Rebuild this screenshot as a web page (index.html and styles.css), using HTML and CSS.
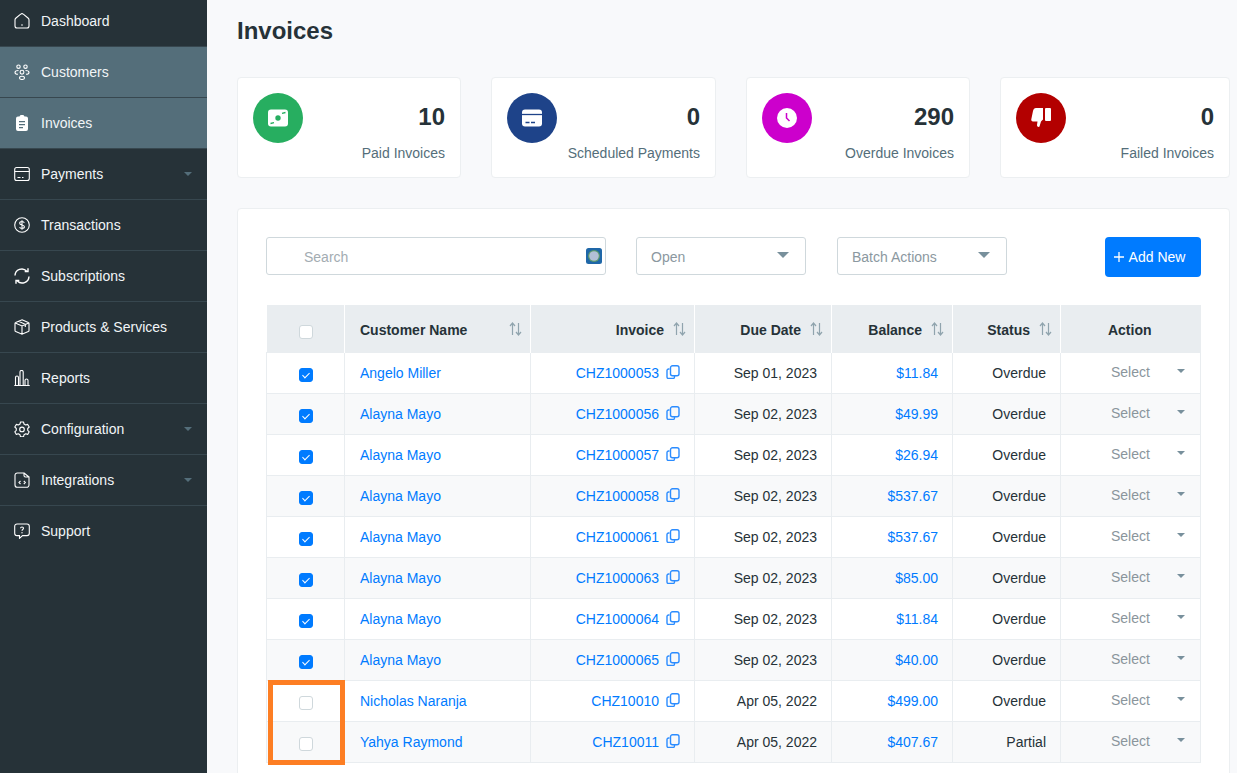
FILE: index.html
```html
<!DOCTYPE html>
<html lang="en">
<head>
<meta charset="utf-8">
<title>Invoices</title>
<link rel="stylesheet" href="styles.css">
</head>
<body>
<svg class="defs" width="0" height="0" aria-hidden="true">
  <symbol id="sort" viewBox="0 0 13 14"><path class="sort-up" d="M3.5 13V1.5M1 4l2.5-3L6 4"/><path class="sort-down" d="M9.5 1v11.5M7 10l2.5 3 2.5-3"/></symbol>
  <symbol id="copy" viewBox="0 0 14 14"><path d="M3.500 4H2.600A1.600 1.600 0 0 0 1 5.600v6.300a1.600 1.600 0 0 0 1.600 1.600h4.300a1.600 1.600 0 0 0 1.600-1.600V11"/><rect x="4.500" y=".8" width="8.500" height="10" rx="2"/></symbol>
</svg>
<div class="app">
  <aside class="sidebar">
    <nav class="nav">
      <a class="nav-item"><svg class="nav-icon" viewBox="0 0 16 16"><path d="M1 6.800c0-.8.4-1.300 1-1.800l4.700-3.800a2 2 0 0 1 2.600 0L14 5c.6.5 1 1 1 1.800V13a2 2 0 0 1-2 2H3a2 2 0 0 1-2-2z"/><circle class="dot" cx="8" cy="12" r=".8"/></svg><span>Dashboard</span></a>
      <a class="nav-item active"><svg class="nav-icon" viewBox="0 0 16 16"><circle cx="4.500" cy="2.700" r="1.700"/><circle cx="11.500" cy="2.700" r="1.700"/><circle cx="8" cy="8.200" r="1.900"/><path d="M5.500 14c0-1 1-1.700 2.500-1.700s2.500.7 2.500 1.700-1 1.500-2.500 1.500-2.500-.5-2.500-1.500zM4.500 6.500C2.500 6.500 1 7.200 1 8.500s1.200 1.800 3 1.800M11.500 6.500c2 0 3.500.7 3.500 2s-1.200 1.800-3 1.800"/></svg><span>Customers</span></a>
      <a class="nav-item active"><svg class="nav-icon" viewBox="0 0 16 16"><path class="fill" fill-rule="evenodd" d="M5.500 1.500C5.700.6 6.500 0 7.300 0h1.400c.8 0 1.600.6 1.800 1.500H12a2 2 0 0 1 2 2V14a2 2 0 0 1-2 2H4a2 2 0 0 1-2-2V3.500a2 2 0 0 1 2-2zM5 6v1.300h6V6zm0 3v1.300h6V9zm0 3v1.300h4V12z"/></svg><span>Invoices</span></a>
      <a class="nav-item"><svg class="nav-icon" viewBox="0 0 16 16"><rect x=".7" y="1.500" width="14.600" height="13" rx="2"/><path d="M.7 5.500h14.600M3.500 11.500h3M8 11.500h1.500"/></svg><span>Payments</span><i class="nav-caret"></i></a>
      <a class="nav-item"><svg class="nav-icon" viewBox="0 0 16 16"><circle cx="8" cy="8" r="7.300"/><path d="M10.300 5.800C10 4.900 9.100 4.500 8 4.500c-1.300 0-2.300.6-2.300 1.700C5.700 8.600 10.400 7.300 10.400 9.800c0 1.100-1 1.700-2.400 1.700-1.200 0-2.100-.5-2.400-1.400M8 3.200v9.600"/></svg><span>Transactions</span></a>
      <a class="nav-item"><svg class="nav-icon thick" viewBox="0 0 16 16"><path d="M1 7.500A6.800 6.800 0 0 1 12.800 3.200M14 .3V3.600h-3.300M15 8.500A6.800 6.800 0 0 1 3.200 12.800M2 15.700V12.400h3.300"/></svg><span>Subscriptions</span></a>
      <a class="nav-item"><svg class="nav-icon" viewBox="0 0 16 16"><path d="M8 .8l6.300 2.700a1 1 0 0 1 .7 1v7a1 1 0 0 1-.7 1L8 15.200 1.700 12.500a1 1 0 0 1-.7-1v-7a1 1 0 0 1 .7-1zM1.300 4 8 7l6.700-3M8 7v8M4.500 2.300 11.300 5.300V8"/></svg><span>Products &amp; Services</span></a>
      <a class="nav-item"><svg class="nav-icon" viewBox="0 0 16 16"><path d="M.3 15.500h15.400M1.500 15V7.500a1.500 1.500 0 0 1 3 0V15M6 15V2a1.600 1.600 0 0 1 3.200 0v13M11 15v-4.500a1.500 1.500 0 0 1 3 0V15"/></svg><span>Reports</span></a>
      <a class="nav-item"><svg class="nav-icon" viewBox="0 0 16 16"><path d="M6.500 1h3l.5 2 1.700 1 2-.6 1.500 2.600-1.500 1.500v1.800l1.500 1.500-1.500 2.600-2-.6-1.700 1-.5 2h-3l-.5-2-1.700-1-2 .6L.8 10.800l1.500-1.500V7.500L.8 6l1.500-2.600 2 .6L6 3z" stroke-linejoin="round"/><circle cx="8" cy="8.400" r="2.300"/></svg><span>Configuration</span><i class="nav-caret"></i></a>
      <a class="nav-item"><svg class="nav-icon" viewBox="0 0 16 16"><path d="M3.300 1H10v2.500A1.500 1.500 0 0 0 11.500 5H15v8a2.300 2.300 0 0 1-2.300 2.300H3.300A2.300 2.300 0 0 1 1 13V3.300A2.300 2.300 0 0 1 3.300 1zM10 1l5 4M6.500 9 5 10.500 6.500 12M9.800 9l1.500 1.500L9.800 12"/></svg><span>Integrations</span><i class="nav-caret"></i></a>
      <a class="nav-item"><svg class="nav-icon" viewBox="0 0 16 16"><path d="M3 1h10a2.300 2.300 0 0 1 2.300 2.300v7a2.300 2.300 0 0 1-2.300 2.300H8.500l-3 2.700v-2.700H3A2.300 2.300 0 0 1 .7 10.300v-7A2.300 2.300 0 0 1 3 1z"/><path d="M6.500 5.300C6.600 4.500 7.200 4 8 4s1.500.5 1.500 1.300c0 1.200-1.500 1.200-1.500 2.400"/><circle class="dot" cx="8" cy="9.700" r=".7"/></svg><span>Support</span></a>
    </nav>
  </aside>
  <main class="main">
    <h1 class="title">Invoices</h1>
    <section class="stats">
      <div class="stat">
        <div class="stat-icon green"><svg viewBox="0 0 20 20" class="stat-svg"><rect y="1.500" width="20" height="17" rx="3" fill="#fff"/><circle cx="10" cy="10" r="2.700" fill="#27ae60"/><path d="M2.500 15.500l3.500-.8M14 5.300l3.500-.8" stroke="#27ae60" stroke-width="1.300"/></svg></div>
        <div class="stat-text"><div class="stat-num">10</div><div class="stat-label">Paid Invoices</div></div>
      </div>
      <div class="stat">
        <div class="stat-icon navy"><svg viewBox="0 0 20 20" class="stat-svg"><rect y="1.500" width="20" height="17" rx="3" fill="#fff"/><path d="M0 6.500h20" stroke="#1e4389" stroke-width="1.300"/><path d="M3.500 14.500h4M9 14.500h4" stroke="#1e4389" stroke-width="1.300"/></svg></div>
        <div class="stat-text"><div class="stat-num">0</div><div class="stat-label">Scheduled Payments</div></div>
      </div>
      <div class="stat">
        <div class="stat-icon magenta"><svg viewBox="0 0 20 20" class="stat-svg"><circle cx="10" cy="10" r="10" fill="#fff"/><path d="M9.500 5v5l3 3" fill="none" stroke="#c0c" stroke-width="1.500"/></svg></div>
        <div class="stat-text"><div class="stat-num">290</div><div class="stat-label">Overdue Invoices</div></div>
      </div>
      <div class="stat">
        <div class="stat-icon red"><svg viewBox="0 0 20 20" class="stat-svg"><path fill="#fff" d="M5 0h7v11.500l-2 2-1.500 5c-.3.800-2.500.800-2.500-1.500l.5-3.500H2c-1.300 0-2-1-1.700-2.200L2 3c.4-1.800 1.500-3 3-3z"/><rect x="14" width="6" height="13" rx="1" fill="#fff"/></svg></div>
        <div class="stat-text"><div class="stat-num">0</div><div class="stat-label">Failed Invoices</div></div>
      </div>
    </section>
    <section class="panel">
      <div class="toolbar">
        <div class="search">
          <input class="search-input" type="text" placeholder="Search">
          <svg class="ext-icon" viewBox="0 0 16 16"><rect width="16" height="16" rx="2.500" fill="#1f67a8"/><circle cx="8" cy="8" r="6" fill="#5c9a6e"/><circle cx="8" cy="8" r="4.800" fill="#b3c0d6"/></svg>
        </div>
        <div class="select wide"><span>Open</span><i class="select-caret"></i></div>
        <div class="select batch"><span>Batch Actions</span><i class="select-caret"></i></div>
        <button class="add-btn"><svg class="plus" viewBox="0 0 12 12"><path d="M6 1v10M1 6h10"/></svg>Add New</button>
      </div>
      <div class="table-wrap">
        <table class="grid">
          <colgroup><col class="c1"><col class="c2"><col class="c3"><col class="c4"><col class="c5"><col class="c6"><col class="c7"></colgroup>
          <thead>
            <tr>
              <th class="center first"><span class="check"></span></th>
              <th><div class="th-in between"><span>Customer Name</span><svg class="sort"><use href="#sort"/></svg></div></th>
              <th><div class="th-in"><span>Invoice</span><svg class="sort active-up"><use href="#sort"/></svg></div></th>
              <th><div class="th-in"><span>Due Date</span><svg class="sort"><use href="#sort"/></svg></div></th>
              <th><div class="th-in"><span>Balance</span><svg class="sort"><use href="#sort"/></svg></div></th>
              <th><div class="th-in"><span>Status</span><svg class="sort"><use href="#sort"/></svg></div></th>
              <th class="center last">Action</th>
            </tr>
          </thead>
          <tbody>
            <tr><td class="center"><span class="check on"></span></td><td><a class="link">Angelo Miller</a></td><td class="right"><a class="link">CHZ1000053</a><svg class="copy"><use href="#copy"/></svg></td><td class="right">Sep 01, 2023</td><td class="right"><a class="link">$11.84</a></td><td class="right">Overdue</td><td><div class="action"><span>Select</span><i class="action-caret"></i></div></td></tr>
            <tr><td class="center"><span class="check on"></span></td><td><a class="link">Alayna Mayo</a></td><td class="right"><a class="link">CHZ1000056</a><svg class="copy"><use href="#copy"/></svg></td><td class="right">Sep 02, 2023</td><td class="right"><a class="link">$49.99</a></td><td class="right">Overdue</td><td><div class="action"><span>Select</span><i class="action-caret"></i></div></td></tr>
            <tr><td class="center"><span class="check on"></span></td><td><a class="link">Alayna Mayo</a></td><td class="right"><a class="link">CHZ1000057</a><svg class="copy"><use href="#copy"/></svg></td><td class="right">Sep 02, 2023</td><td class="right"><a class="link">$26.94</a></td><td class="right">Overdue</td><td><div class="action"><span>Select</span><i class="action-caret"></i></div></td></tr>
            <tr><td class="center"><span class="check on"></span></td><td><a class="link">Alayna Mayo</a></td><td class="right"><a class="link">CHZ1000058</a><svg class="copy"><use href="#copy"/></svg></td><td class="right">Sep 02, 2023</td><td class="right"><a class="link">$537.67</a></td><td class="right">Overdue</td><td><div class="action"><span>Select</span><i class="action-caret"></i></div></td></tr>
            <tr><td class="center"><span class="check on"></span></td><td><a class="link">Alayna Mayo</a></td><td class="right"><a class="link">CHZ1000061</a><svg class="copy"><use href="#copy"/></svg></td><td class="right">Sep 02, 2023</td><td class="right"><a class="link">$537.67</a></td><td class="right">Overdue</td><td><div class="action"><span>Select</span><i class="action-caret"></i></div></td></tr>
            <tr><td class="center"><span class="check on"></span></td><td><a class="link">Alayna Mayo</a></td><td class="right"><a class="link">CHZ1000063</a><svg class="copy"><use href="#copy"/></svg></td><td class="right">Sep 02, 2023</td><td class="right"><a class="link">$85.00</a></td><td class="right">Overdue</td><td><div class="action"><span>Select</span><i class="action-caret"></i></div></td></tr>
            <tr><td class="center"><span class="check on"></span></td><td><a class="link">Alayna Mayo</a></td><td class="right"><a class="link">CHZ1000064</a><svg class="copy"><use href="#copy"/></svg></td><td class="right">Sep 02, 2023</td><td class="right"><a class="link">$11.84</a></td><td class="right">Overdue</td><td><div class="action"><span>Select</span><i class="action-caret"></i></div></td></tr>
            <tr><td class="center"><span class="check on"></span></td><td><a class="link">Alayna Mayo</a></td><td class="right"><a class="link">CHZ1000065</a><svg class="copy"><use href="#copy"/></svg></td><td class="right">Sep 02, 2023</td><td class="right"><a class="link">$40.00</a></td><td class="right">Overdue</td><td><div class="action"><span>Select</span><i class="action-caret"></i></div></td></tr>
            <tr><td class="center"><span class="check"></span></td><td><a class="link">Nicholas Naranja</a></td><td class="right"><a class="link">CHZ10010</a><svg class="copy"><use href="#copy"/></svg></td><td class="right">Apr 05, 2022</td><td class="right"><a class="link">$499.00</a></td><td class="right">Overdue</td><td><div class="action"><span>Select</span><i class="action-caret"></i></div></td></tr>
            <tr><td class="center"><span class="check"></span></td><td><a class="link">Yahya Raymond</a></td><td class="right"><a class="link">CHZ10011</a><svg class="copy"><use href="#copy"/></svg></td><td class="right">Apr 05, 2022</td><td class="right"><a class="link">$407.67</a></td><td class="right">Partial</td><td><div class="action"><span>Select</span><i class="action-caret"></i></div></td></tr>
          </tbody>
        </table>
        <div class="highlight"></div>
      </div>
    </section>
  </main>
</div>
</body>
</html>
```
FILE: styles.css
```css
* { box-sizing: border-box; }
html, body { margin: 0; height: 100%; overflow: hidden; }
body { font-family: "Liberation Sans", Arial, sans-serif; font-size: 14px; color: #263238; background: #f8f9fb; }
.defs { position: absolute; }
.app { display: flex; height: 773px; overflow: hidden; }

.sidebar { width: 207px; flex: none; background: #263238; overflow: hidden; }
.nav { margin-top: -4px; display: flex; flex-direction: column; }
.nav-item { height: 51px; display: flex; align-items: center; padding: 0 14px; border-bottom: 1px solid #37474f; color: #f1f5f7; gap: 11px; }
.nav-item:last-child { border-bottom-color: transparent; }
.nav-item.active { background: #546e7a; }
.nav-icon { width: 16px; height: 16px; flex: none; fill: none; stroke: #fff; stroke-width: 1.100; }
.nav-icon.thick { stroke-width: 1.400; }
.nav-icon .dot { fill: #fff; stroke: none; }
.nav-icon .fill { fill: #fff; stroke: none; }
.nav-caret { margin-left: auto; margin-right: 1px; width: 0; height: 0; border-left: 4.500px solid transparent; border-right: 4.500px solid transparent; border-top: 4.500px solid #546e7a; }

.main { flex: 1; min-width: 0; padding: 0 7px 0 30px; }
.title { margin: 0; padding-top: 17px; height: 77px; font-size: 24px; line-height: 28px; font-weight: 700; color: #263238; }

.stats { display: grid; grid-template-columns: 224px 225px 224px 230px; column-gap: 30px; }
.stat { height: 101px; background: #fff; border: 1px solid #eceff1; border-radius: 4px; padding: 15px; display: flex; justify-content: space-between; }
.stat-icon { width: 50px; height: 50px; border-radius: 50%; display: flex; align-items: center; justify-content: center; flex: none; }
.stat-svg { width: 20px; height: 20px; }
.green { background: #27ae60; }
.navy { background: #1e4389; }
.magenta { background: #c0c; }
.red { background: #b30000; }
.stat-text { text-align: right; padding-top: 10px; }
.stat-num { font-size: 24px; line-height: 28px; font-weight: 700; color: #263238; }
.stat-label { margin-top: 12px; line-height: 20px; color: #546e7a; }

.panel { margin-top: 30px; background: #fff; border: 1px solid #eceff1; border-radius: 4px; padding: 28px; height: 600px; }
.toolbar { display: flex; align-items: flex-start; margin-bottom: 28px; }
.search { position: relative; width: 340px; height: 38px; }
.search-input { width: 100%; height: 100%; border: 1px solid #cfd8dc; border-radius: 3px; background: #fff; padding: 2px 16px 0 37px; font: 14px "Liberation Sans", Arial, sans-serif; outline: none; }
.search-input::placeholder { color: #a3acb2; }
.ext-icon { position: absolute; right: 4px; top: 11px; width: 16px; height: 16px; }
.select { height: 38px; width: 170px; border: 1px solid #cfd8dc; border-radius: 3px; display: flex; align-items: center; justify-content: space-between; padding: 2px 16px 0 14px; color: #8b98a0; }
.select.wide { margin-left: 30px; }
.select.batch { margin-left: 31px; }
.select-caret { width: 0; height: 0; border-left: 6px solid transparent; border-right: 6px solid transparent; border-top: 6px solid #78909c; margin-top: -5px; }
.add-btn { margin-left: auto; width: 96px; height: 40px; border: 0; border-radius: 4px; background: #007bff; color: #fff; font: 14px "Liberation Sans", Arial, sans-serif; display: flex; align-items: center; justify-content: center; gap: 4px; padding: 0 8px 0 0; }
.plus { width: 12px; height: 12px; fill: none; stroke: #fff; stroke-width: 1.300; }

.table-wrap { position: relative; }
.grid { width: 934px; table-layout: fixed; border-collapse: collapse; color: #263238; }
.c1 { width: 78px; } .c2 { width: 186px; } .c3 { width: 164px; } .c4 { width: 137px; } .c5 { width: 121px; } .c6 { width: 108px; } .c7 { width: 140px; }
.grid th { height: 47px; background: #e9edf0; border-left: 1px solid #fff; border-right: 1px solid #fff; padding: 4px 8px 0 15px; font-weight: 700; text-align: left; }
.grid th:first-child { border-left: 0; }
.grid th:last-child { border-right: 0; }
.grid th.center { text-align: center; padding: 4px 0 0; }
.grid th.first { padding: 6px 0 0 1px; }
.grid th.last { padding-right: 2px; }
.th-in { display: flex; justify-content: flex-end; align-items: center; gap: 9px; }
.th-in.between { justify-content: space-between; }
.sort { width: 13px; height: 14px; margin-top: -3px; flex: none; }
.sort-up, .sort-down { fill: none; stroke: #90a4ae; stroke-width: 1.200; }
.active-up .sort-up { stroke: #546e7a; }
.grid td { height: 41px; padding: 0 15px; border: 1px solid #e9edf0; white-space: nowrap; }
.grid tbody tr:nth-child(even) td { background: #f8f9fa; }
.grid td.center { text-align: center; padding: 2px 0 0 1px; }
.grid td.right { text-align: right; padding-right: 14px; }
.link { color: #007bff; }
.copy { width: 14px; height: 14px; margin-left: 7px; vertical-align: -1px; fill: none; stroke: #2b8cff; stroke-width: 1.400; }
.check { display: inline-block; width: 14px; height: 14px; border: 1px solid #cfd8dc; border-radius: 3px; background: #fff; vertical-align: middle; }
.check.on { background: #007bff; border-color: #007bff; position: relative; }
.check.on::after { content: ""; position: absolute; left: 4px; top: 2.500px; width: 3px; height: 6px; border: solid #fff; border-width: 0 1.200px 1.200px 0; transform: rotate(45deg); }
.action { display: flex; align-items: center; padding-left: 35px; color: #8a959c; margin-top: -2px; }
.action-caret { margin-left: auto; margin-top: -1px; width: 0; height: 0; border-left: 4px solid transparent; border-right: 4px solid transparent; border-top: 4px solid #78909c; }
.highlight { position: absolute; left: 2px; top: 375px; width: 77px; height: 85px; border: 5px solid #fd7e23; pointer-events: none; }
```
